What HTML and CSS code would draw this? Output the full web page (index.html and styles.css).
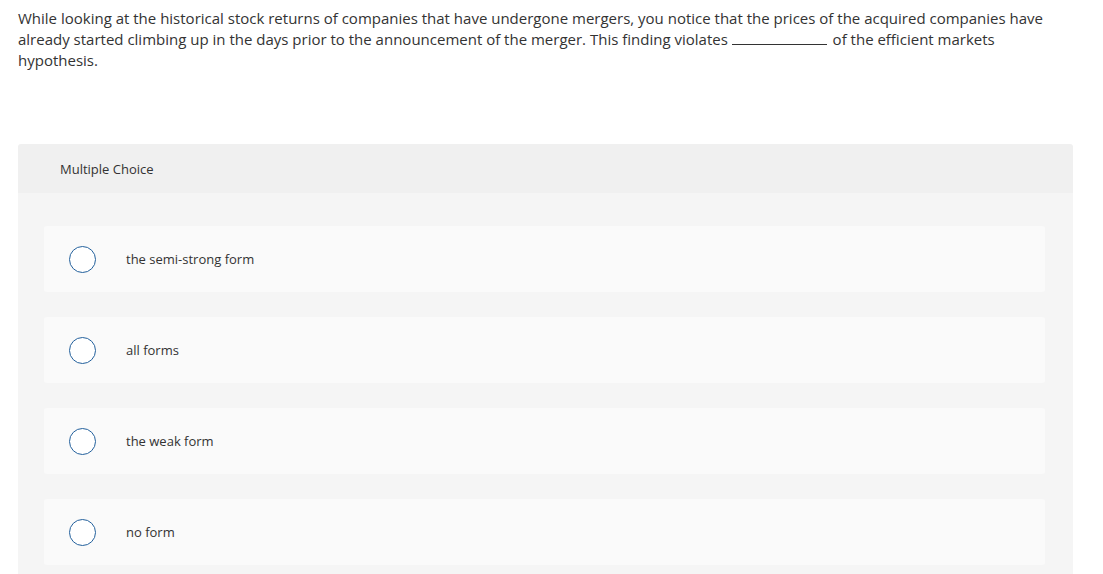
FILE: index.html
```html
<!DOCTYPE html>
<html>
<head>
<meta charset="utf-8">
<link rel="stylesheet" href="styles.css">
</head>
<body>
<div class="page">
  <p class="question">While looking at the historical stock returns of companies that have undergone mergers, you notice that the prices of the acquired companies have already started climbing up in the days prior to the announcement of the merger. This finding violates <span class="blank"></span> of the efficient markets hypothesis.</p>
  <div class="panel">
    <div class="panel-head">Multiple Choice</div>
    <div class="panel-body">
      <div class="option"><span class="radio"></span><span class="label">the semi-strong form</span></div>
      <div class="option"><span class="radio"></span><span class="label">all forms</span></div>
      <div class="option"><span class="radio"></span><span class="label">the weak form</span></div>
      <div class="option"><span class="radio"></span><span class="label">no form</span></div>
    </div>
  </div>
</div>
</body>
</html>
```

FILE: styles.css
```css
html, body {
  margin: 0;
  padding: 0;
  background: #ffffff;
}
body {
  font-family: "Open Sans", "Liberation Sans", sans-serif;
  color: #333333;
}
.page {
  padding: 8px 30px 0 18px;
}
.question {
  margin: 0;
  font-size: 15px;
  line-height: 21px;
  width: 1052px;
}
.blank {
  display: inline-block;
  vertical-align: baseline;
  width: 95px;
  height: 1px;
  background: #333;
  margin-right: 2px;
}
.panel {
  margin-top: 73px;
  width: 1055px;
  border-radius: 3px 3px 0 0;
  overflow: hidden;
}
.panel-head {
  background: #f0f0f0;
  height: 49px;
  display: flex;
  align-items: center;
  padding-left: 42px;
  font-size: 13px;
}
.panel-body {
  background: #f5f5f5;
  padding: 33px 28px 10px 26px;
  display: flex;
  flex-direction: column;
  gap: 25px;
}
.option {
  background: #fafafa;
  border-radius: 3px;
  height: 66px;
  display: flex;
  align-items: center;
  padding-left: 25px;
  font-size: 13px;
}
.radio {
  width: 25px;
  height: 25px;
  border: 1.5px solid #23609c;
  border-radius: 50%;
  background: #fff;
  flex: none;
}
.label {
  margin-left: 30px;
}
```
